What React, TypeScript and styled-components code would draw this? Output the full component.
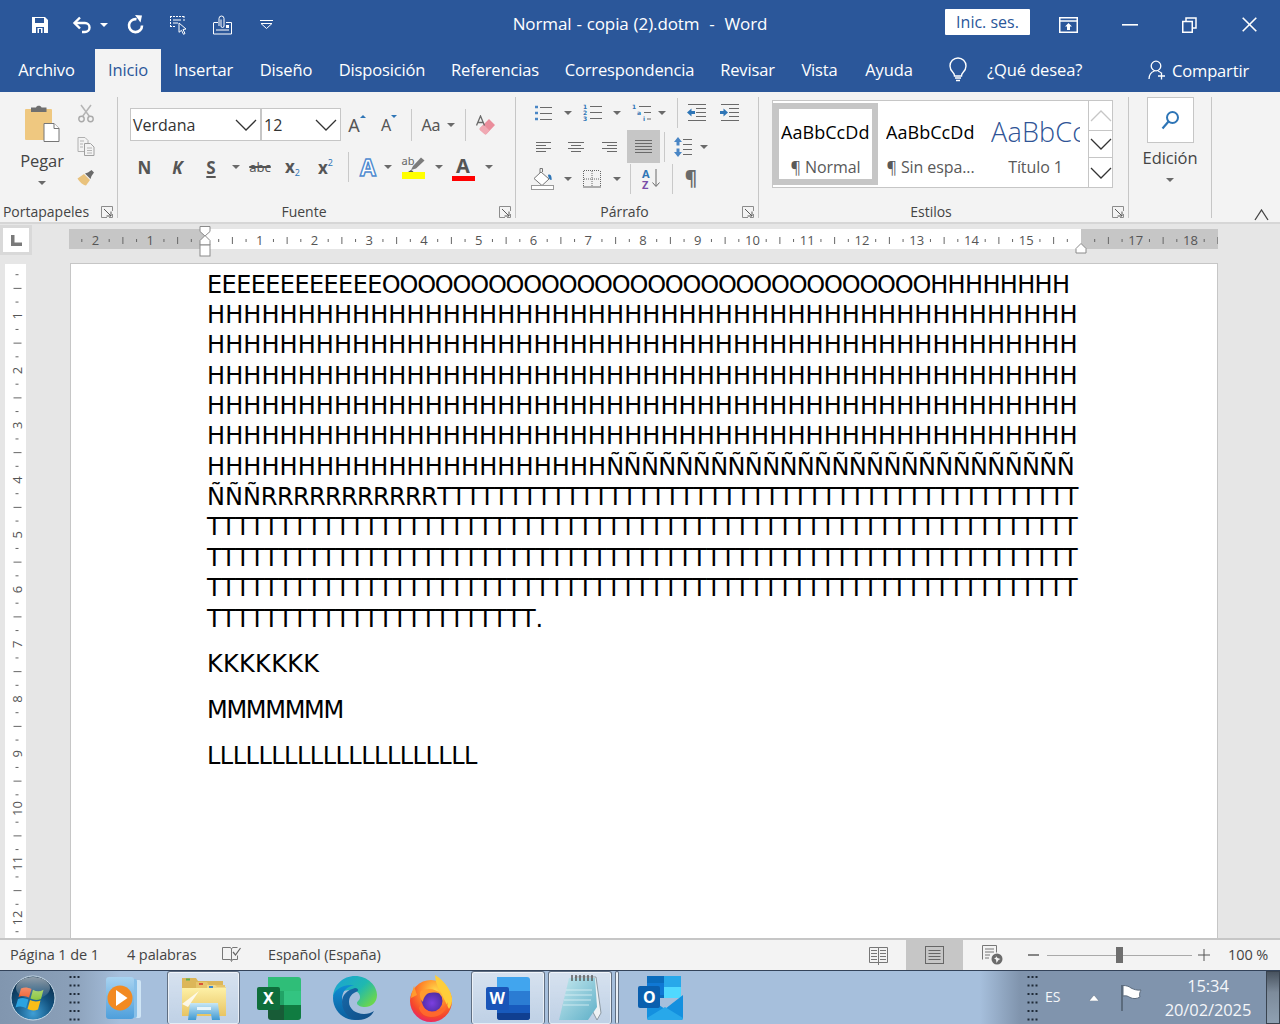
import React from "react";
import styled, { createGlobalStyle } from "styled-components";

const UI = `"Open Sans","Noto Sans",sans-serif`;
const BLUE = "#2b579a";
const GR = "#6a6a6a";

const Global = createGlobalStyle`
  html, body { margin: 0; padding: 0; background: #e6e6e6; }
  * { box-sizing: border-box; }
`;

const Screen = styled.div`
  width: 1280px; height: 1024px; overflow: hidden; display: flex; flex-direction: column;
  font-family: ${UI}; color: #444; font-size: 14px;
`;

/* ---------- title bar ---------- */
const TitleBar = styled.header`
  height: 49px; flex: none; background: ${BLUE}; display: grid; grid-template-columns: 1fr auto 1fr; align-items: center; color: #fff;
`;
const QuickBar = styled.div`display: flex; align-items: center; padding-left: 22px; height: 100%;`;
const WinCtl = styled.div`display: flex; align-items: center; justify-content: flex-end; height: 100%;`;
const Cell = styled.div<{ $w: number; $on?: boolean; $ml?: number }>`
  flex: none; width: ${(p) => p.$w}px; margin-left: ${(p) => p.$ml ?? 0}px; height: 100%;
  display: flex; align-items: center; justify-content: center;
  background: ${(p) => (p.$on ? "#c6c6c6" : "transparent")};
`;
const DocTitle = styled.div`font-size: 17px; white-space: pre; word-spacing: 0.6px; letter-spacing: -0.1px; margin-bottom: 3px;`;
const SignIn = styled.div`
  width: 85px; height: 26px; margin-right: 18px; background: #fff; color: ${BLUE}; font-size: 16px;
  display: flex; align-items: center; justify-content: center; margin-top: -5px; border-radius: 1px; padding-bottom: 1px;
`;

/* ---------- tabs ---------- */
const TabBar = styled.nav`
  height: 43px; flex: none; background: ${BLUE}; display: flex; align-items: stretch; padding-left: 5px;
`;
const Tab = styled.div<{ $w: number; $on?: boolean; $ml?: number }>`
  width: ${(p) => p.$w}px; margin-left: ${(p) => p.$ml ?? 0}px; flex: none; display: flex; align-items: center; justify-content: center;
  font-size: 16.5px; padding-bottom: 2px; letter-spacing: -0.15px; white-space: nowrap;
  color: ${(p) => (p.$on ? BLUE : "#fff")}; background: ${(p) => (p.$on ? "#f3f3f3" : "transparent")};
`;
const TellMe = styled.div`
  display: flex; align-items: center; margin-left: 22px; color: #fff; font-size: 16.5px; letter-spacing: -0.1px; width: 166px; gap: 20px; padding-bottom: 3px;
`;
const Share = styled.div`
  display: flex; align-items: center; margin-left: 33px; color: #fff; font-size: 16.5px; letter-spacing: -0.15px; gap: 6px; padding-bottom: 1px;
`;

/* ---------- ribbon ---------- */
const Ribbon = styled.section`
  height: 132px; flex: none; background: #f3f3f3; border-bottom: 2px solid #d6d6d6; display: flex; position: relative;
`;
const Group = styled.div<{ $w: number; $nosep?: boolean }>`
  width: ${(p) => p.$w}px; flex: none; display: flex; flex-direction: column; position: relative;
  margin: 5px 0 4px; padding-top: 0;
  border-right: ${(p) => (p.$nosep ? "none" : "1px solid #c6c6c6")};
`;
const GroupBody = styled.div`flex: 1; min-height: 0; display: flex;`;
const GroupFoot = styled.div`
  height: 20px; flex: none; display: flex; align-items: center; font-size: 14px; color: #444; padding-right: 4px; white-space: nowrap; margin-bottom: -3px;
`;
const FootLabel = styled.div`flex: 1; text-align: center; margin-right: 9px;`;
const Launcher = styled.div`width: 12px; height: 12px; display: flex; margin-top: 1px;`;

const Clip = styled.div`display: flex; width: 100%; padding-left: 0;`;
const PasteCol = styled.div`
  width: 72px; margin-left: 6px; display: flex; flex-direction: column; align-items: center; padding-top: 7px;
`;
const PasteName = styled.div`font-size: 16.5px; margin-top: 8px; line-height: 22px; letter-spacing: -0.1px;`;
const ClipTools = styled.div`display: flex; flex-direction: column; width: 16px; margin-left: 0; align-items: center; gap: 14px; padding-top: 7px;`;

const Rows = styled.div<{ $pl: number; $pt: number }>`
  display: flex; flex-direction: column; padding: ${(p) => p.$pt}px 0 0 ${(p) => p.$pl}px;
`;
const Row = styled.div<{ $h: number; $mb?: number }>`
  display: flex; align-items: center; height: ${(p) => p.$h}px; margin-bottom: ${(p) => p.$mb ?? 0}px;
`;
const Combo = styled.div<{ $w: number; $ml?: number }>`
  width: ${(p) => p.$w}px; height: 33px; flex: none; background: #fff; border: 1px solid #c6c6c6; margin-left: ${(p) => p.$ml ?? 0}px;
  display: flex; align-items: center; justify-content: space-between; padding: 0 3px 0 2px; font-size: 16px; color: #333;
`;
const Sep = styled.div<{ $ml?: number; $h?: number }>`
  width: 1px; flex: none; height: ${(p) => p.$h ?? 30}px; background: #c9c9c9; margin-left: ${(p) => p.$ml ?? 0}px;
`;
const Caret = styled.div`
  width: 0; height: 0; border-left: 4px solid transparent; border-right: 4px solid transparent; border-top: 4px solid ${GR};
`;
const Glyph = styled.span<{ $s?: number; $b?: boolean; $c?: string; $i?: boolean; $u?: boolean; $st?: boolean }>`
  font-size: ${(p) => p.$s ?? 17}px; font-weight: ${(p) => (p.$b ? 700 : 400)}; color: ${(p) => p.$c ?? "#555"};
  font-style: ${(p) => (p.$i ? "italic" : "normal")}; line-height: 1; font-family: "Noto Sans", sans-serif;
  text-decoration: ${(p) => (p.$u ? "underline" : p.$st ? "line-through" : "none")}; text-underline-offset: 2px; text-decoration-thickness: 2px;
  white-space: nowrap;
`;
const Sub = styled.sub`font-size: 9px; color: #2e75b6; font-weight: 400; vertical-align: -3px;`;
const Sup = styled.sup`font-size: 9px; color: #2e75b6; font-weight: 400; vertical-align: 8px;`;
const Outlined = styled.span`
  font: 700 23px "Noto Sans", sans-serif; color: #fff; -webkit-text-stroke: 1.4px #4f8bd0; line-height: 1;
`;
const ColorA = styled.div`display: flex; flex-direction: column; align-items: center; line-height: 1; margin-top: 2px;`;
const ColorBar = styled.div<{ $c: string; $h: number }>`width: 23px; height: ${(p) => p.$h}px; background: ${(p) => p.$c};`;
const HighlightBox = styled.div`display: flex; flex-direction: column; align-items: center; margin-top: 0;`;
const AbLabel = styled.span`font: 11px/11px "Noto Sans", sans-serif; color: #666; margin-bottom: -11px; align-self: flex-start;`;

const Gallery = styled.div`
  margin: 3px 0 0 13px; width: 341px; height: 88px; background: #fff; border: 1px solid #c6c6c6; display: flex; padding: 2px 0 2px 0;
`;
const StyleItem = styled.div<{ $w: number; $sel?: boolean }>`
  width: ${(p) => p.$w}px; flex: none; display: flex; flex-direction: column; align-items: center; justify-content: flex-start;
  padding-top: ${(p) => (p.$sel ? 11 : 17)}px; overflow: hidden;
  border: ${(p) => (p.$sel ? "6px solid #c6c6c6" : "none")};
`;
const Sample = styled.div<{ $big?: boolean }>`
  font-size: ${(p) => (p.$big ? 27 : 18)}px; color: ${(p) => (p.$big ? "#2f5496" : "#000")}; line-height: 24px; height: 24px;
  width: 89px; overflow: hidden; white-space: nowrap; letter-spacing: ${(p) => (p.$big ? 0.2 : 0.05)}px; font-weight: ${(p) => (p.$big ? 300 : 400)};
  font-family: "Open Sans", sans-serif;
`;
const StyleName = styled.div`font-size: 16px; color: #595959; margin-top: 12px; white-space: nowrap; letter-spacing: -0.1px;`;
const Scroller = styled.div`width: 24px; margin-left: auto; margin-top: -2px; margin-bottom: -2px; display: flex; flex-direction: column; flex: none;`;
const ScrollBtn = styled.div<{ $h: number }>`
  height: ${(p) => p.$h}px; display: flex; align-items: center; justify-content: center; border-left: 1px solid #c6c6c6; border-bottom: 1px solid #c6c6c6; background: #fff;
  &:last-child { border-bottom: none; }
`;
const EditCol = styled.div`width: 100%; display: flex; flex-direction: column; align-items: center;`;
const EditBtn = styled.div`
  width: 47px; height: 46px; background: #fff; border: 1px solid #c6c6c6; display: flex; align-items: center; justify-content: center;
`;
const EditName = styled.div`font-size: 16.5px; margin-top: 4px; line-height: 22px; letter-spacing: -0.1px;`;
const CaretGap = styled.div`margin-top: 9px;`;
const Collapse = styled.div`position: absolute; right: 11px; bottom: 1px; display: flex;`;

/* ---------- rulers ---------- */
const RulerRow = styled.div`height: 39px; flex: none; background: #e6e6e6; display: flex;`;
const TabCorner = styled.div`
  width: 32px; height: 30px; margin-top: 1px; background: #fff; border: 3px solid #d9d9d9; flex: none; display: flex; align-items: center; justify-content: center;
`;
const HRuler = styled.svg`flex: none; margin-left: 37px; display: block;`;
const DocArea = styled.main`flex: 1; min-height: 0; background: #e6e6e6; display: flex; overflow: hidden;`;
const VRuler = styled.svg`flex: none; display: block; margin-left: 5px;`;
const Page = styled.article`
  width: 1148px; margin-left: 44px; background: #fff; border: 1px solid #c6c6c6; border-bottom: none; padding: 5.6px 0 0 136px;
  font-family: "DejaVu Sans", Verdana, sans-serif; font-size: 24px; color: #000;
`;
const DocLine = styled.p<{ $mb?: number }>`
  margin: 0 0 ${(p) => p.$mb ?? 0}px; line-height: 30.36px; height: 30.36px; white-space: nowrap;
`;
const Run = styled.span<{ $ls: number }>`letter-spacing: ${(p) => p.$ls}px;`;

/* ---------- status bar ---------- */
const StatusBar = styled.footer`
  height: 32px; flex: none; background: #f3f3f3; border-top: 2px solid #c6c6c6; display: flex; align-items: stretch; font-size: 14.5px; color: #444; position: relative; z-index: 1;
`;
const StatusText = styled.div<{ $w: number; $ml?: number }>`
  width: ${(p) => p.$w}px; margin-left: ${(p) => p.$ml ?? 0}px; flex: none; display: flex; align-items: center; white-space: nowrap; letter-spacing: -0.1px; padding-bottom: 2px;
`;
const ZoomSlider = styled.div`
  width: 145px; height: 1px; background: #a9a9a9; flex: none; align-self: center; display: flex; align-items: center; margin-left: 1px;
`;
const Thumb = styled.div`width: 7px; height: 16px; background: #6e6e6e; margin-left: 69px; flex: none;`;

/* ---------- taskbar ---------- */
const Taskbar = styled.div`
  height: 54px; flex: none; display: flex; align-items: stretch; border-top: 1px solid #33435a;
  background: linear-gradient(90deg, #8196af 0, #8a9fb8 70px, #a6bfdc 120px, #a6bfdc 980px, #8094ad 1020px, #8094ad 100%);
  color: #f4f6f9;
`;
const TaskCell = styled.div<{ $w: number; $ml?: number; $active?: boolean }>`
  width: ${(p) => p.$w}px; margin-left: ${(p) => p.$ml ?? 0}px; flex: none; display: flex; align-items: center; justify-content: center;
  ${(p) => p.$active && `
    background: linear-gradient(180deg, rgba(255,255,255,.55), rgba(255,255,255,.28));
    border: 1px solid rgba(60,75,95,.75); border-radius: 3px; box-shadow: inset 0 0 0 1px rgba(255,255,255,.6); border-bottom: none;
  `}
`;
const Gripper = styled.svg`display: block;`;
const LangText = styled.div`font-size: 14px; width: 30px; margin-left: 6px; align-self: center; padding-bottom: 3px;`;
const Clock = styled.div`
  width: 110px; margin-left: 10px; display: flex; flex-direction: column; align-items: center; justify-content: center; font-size: 16.5px; line-height: 24px; letter-spacing: -0.1px; color: #f4f6f9; padding-top: 1px;
`;
const ShowDesktop = styled.div`
  width: 14px; margin-left: auto; background: linear-gradient(180deg, #48535f, #7d8b9b 40%, #8fa0b2); border: 1px solid #39434f;
`;

/* ---------- icons ---------- */
const Svg: React.FC<React.PropsWithChildren<{ w: number; h: number; vb?: string }>> = ({ w, h, vb, children }) => (
  <svg width={w} height={h} viewBox={vb ?? `0 0 ${w} ${h}`} fill="none" style={{ display: "block", flex: "none" }}>{children}</svg>
);
const L: React.FC<{ d: string; c?: string; sw?: number }> = ({ d, c = GR, sw = 1 }) => <path d={d} stroke={c} strokeWidth={sw} fill="none" />;

const SaveIcon = () => (
  <Svg w={18} h={18}>
    <path d="M1 1h13l3 3v13H1z" fill="#fff" />
    <rect x="4" y="2" width="9" height="5" fill={BLUE} />
    <rect x="5" y="11" width="8" height="6" fill={BLUE} />
    <rect x="6.500" y="12" width="5" height="5" fill="#fff" />
    <rect x="8" y="13" width="2" height="4" fill={BLUE} />
  </Svg>
);
const UndoIcon = () => (
  <Svg w={20} h={18}>
    <L d="M3 7h10a4.500 4.500 0 0 1 0 9h-3" c="#fff" sw={2.4} />
    <L d="M8 1.500L2.500 7 8 12.500" c="#fff" sw={2.4} />
  </Svg>
);
const RedoIcon = () => (
  <Svg w={19} h={19}>
    <path d="M10.500 4.200A6.500 6.500 0 1 0 16 10.500" stroke="#fff" strokeWidth="2.600" fill="none" />
    <path d="M9 0l7 .5-1.500 7z" fill="#fff" />
  </Svg>
);
const SelectIcon = () => (
  <Svg w={19} h={20}>
    <path d="M1 1.500h14M1 11.500h6M1.500 1v11M15 1v6" stroke="#fff" strokeDasharray="2 1" />
    <L d="M4 5h8M4 8h5" c="#fff" />
    <path d="M10 8l7 6-3 .5 2 4-1.500.8-2-4-2.500 2z" fill={BLUE} stroke="#fff" strokeWidth="1" />
  </Svg>
);
const AttachIcon = () => (
  <Svg w={19} h={20}>
    <path d="M1 7.500h4M13 7.500h5.500V19H.5V7.500" stroke="#fff" />
    <path d="M6 11V3.500a2.500 2.500 0 0 1 5 0V11a1.500 1.500 0 0 1-3 0V4.500" stroke="#fff" />
    <rect x="13" y="10" width="3" height="3" fill="#fff" />
    <path d="M3 15h13" stroke="#fff" />
  </Svg>
);
const CustomIcon = () => (
  <Svg w={13} h={9}>
    <path d="M0 .5h13" stroke="#fff" />
    <path d="M1 3.500l5.500 5 5.500-5z" stroke="#fff" fill={BLUE} />
  </Svg>
);
const SmallWhiteCaret = () => (
  <Svg w={8} h={4}><path d="M0 0h8L4 4z" fill="#fff" /></Svg>
);
const DisplayIcon = () => (
  <Svg w={19} h={16}>
    <rect x=".75" y=".75" width="17.500" height="14.500" stroke="#fff" strokeWidth="1.500" />
    <path d="M1 4h17" stroke="#fff" strokeWidth="1.500" />
    <path d="M9.500 6l3.500 3.500h-2V13H8V9.500H6z" fill="#fff" />
  </Svg>
);
const MinIcon = () => <Svg w={16} h={2}><rect width="16" height="1.600" fill="#fff" /></Svg>;
const RestoreIcon = () => (
  <Svg w={15} h={16}>
    <rect x=".75" y="4.500" width="9.500" height="10.750" stroke="#fff" strokeWidth="1.500" />
    <path d="M4 4V1h10v10h-3.500" stroke="#fff" strokeWidth="1.500" />
  </Svg>
);
const CloseIcon = () => (
  <Svg w={15} h={15}><L d="M.7.7l13.600 13.600M14.300.7L.7 14.300" c="#fff" sw={1.6} /></Svg>
);
const BulbIcon = () => (
  <Svg w={18} h={25}>
    <path d="M9 1a8 8 0 0 0-8 8c0 3 1.500 5 3 6.500C5.500 17 5.500 18 5.500 19h7c0-1 0-2 1.500-3.500 1.500-1.500 3-3.500 3-6.500a8 8 0 0 0-8-8z" stroke="#fff" strokeWidth="1.400" />
    <path d="M6 21h6M7 23.500h4" stroke="#fff" strokeWidth="1.500" />
  </Svg>
);
const PersonIcon = () => (
  <Svg w={18} h={20}>
    <circle cx="8" cy="6" r="4.800" stroke="#fff" strokeWidth="1.300" />
    <path d="M1 19c0-4.500 2.500-7 5.500-8M10 11c1.300.4 2.300 1 3 2" stroke="#fff" strokeWidth="1.300" />
    <path d="M10 16h7M13.500 12.500v7" stroke="#fff" strokeWidth="1.300" />
  </Svg>
);
const LauncherIcon = () => (
  <Svg w={12} h={12}>
    <path d="M11.500 5V.5H.5v11H6" stroke="#8c8c8c" />
    <path d="M3 3l7 7M10 5.500V10H5.500" stroke="#595959" />
    <path d="M8 11.500h3.500V8" stroke="#8c8c8c" />
  </Svg>
);
const Chevron: React.FC<{ w?: number; c?: string; up?: boolean }> = ({ w = 22, c = "#333", up }) => (
  <Svg w={w} h={12}><L d={up ? `M1 11L${w / 2} 1l${w / 2 - 1} 10` : `M1 1l${w / 2 - 1} 10L${w - 1} 1`} c={c} sw={1.300} /></Svg>
);
const PasteIcon = () => (
  <Svg w={36} h={38}>
    <rect x="1" y="5" width="27" height="31" rx="1" fill="#efc880" />
    <path d="M7 3.500h5C12.500 1 17 1 17.500 3.500h5V8H7z" fill="#6f6f6f" />
    <path d="M20 19.500h10l5 5v13H20z" fill="#fff" stroke="#767676" />
    <path d="M30 19.500v5h5" stroke="#767676" fill="#fff" />
  </Svg>
);
const CutIcon = () => (
  <Svg w={16} h={19}>
    <circle cx="3.500" cy="15" r="2.700" stroke="#a9a9a9" strokeWidth="1.400" />
    <circle cx="12.500" cy="15" r="2.700" stroke="#a9a9a9" strokeWidth="1.400" />
    <L d="M11.500 12.500L3 1M4.500 12.500L13 1" c="#b5b5b5" sw={1.500} />
  </Svg>
);
const CopyIcon = () => (
  <Svg w={18} h={19}>
    <path d="M1 .5h7l3 3v11H1z" fill="#f3f3f3" stroke="#b0b0b0" />
    <path d="M7.500 6.500h6l3.500 3.500v8.500H7.500z" fill="#f3f3f3" stroke="#a0a0a0" />
    <L d="M3 4h4M3 7h3M3 10h3M10 11h5M10 13.500h5M10 16h5" c="#b5b5b5" />
  </Svg>
);
const BrushIcon = () => (
  <Svg w={18} h={16}>
    <path d="M.5 8.500L7 4l6 6-4 5.500C6 15 2.500 12 .5 8.500z" fill="#e9c27c" />
    <path d="M8 3.500l3-1 3.500-2.500 2.500 2.500-2.500 3.500-1 3z" fill="#6a6a6a" />
  </Svg>
);
const GrowMark = styled.div<{ $down?: boolean }>`
  width: 0; height: 0; margin: -16px 0 0 0; border-left: 3.500px solid transparent; border-right: 3.500px solid transparent;
  ${(p) => (p.$down ? "border-top: 3px solid #2e75b6;" : "border-bottom: 3px solid #2e75b6;")}
`;
const EraserIcon = () => (
  <Svg w={20} h={20}>
    <path d="M4 13l9-9 6 6-8.500 9a1.500 1.500 0 0 1-2 0L4 15a1.500 1.500 0 0 1 0-2z" fill="#ea8d9b" />
    <path d="M4 13l3.500-3.500 6 6L10.500 19a1.500 1.500 0 0 1-2 0L4 15a1.500 1.500 0 0 1 0-2z" fill="#f0a9b3" />
    <path d="M.5 10.500L4.500 1l4 9.500M1.800 7.500h5.400" stroke="#6a6a6a" strokeWidth="1.300" fill="none" />
  </Svg>
);
const PenIcon = () => (
  <Svg w={24} h={17}>
    <path d="M9 15l2-4 8-8.500 3.500 3-8.500 8z" fill="#7b7b7b" />
    <path d="M6 17l3-2 2.500 1.500L10.500 17z" fill="#555" />
  </Svg>
);
const Bullets = () => (
  <Svg w={18} h={16}>
    <path d="M1 2h3M1 8h3M1 14h3" stroke="#4a86c5" strokeWidth="2.400" />
    <L d="M6 2.500h12M6 8.500h12M6 14.500h12" />
  </Svg>
);
const SmallNum = styled.text`font: 700 6px "DejaVu Sans", sans-serif; fill: #2e75b6;`;
const Numbers = () => (
  <Svg w={19} h={17}>
    <SmallNum x="0" y="5">1</SmallNum><SmallNum x="0" y="11">2</SmallNum><SmallNum x="0" y="17">3</SmallNum>
    <L d="M7 2.500h12M7 8.500h12M7 14.500h12" />
  </Svg>
);
const Multi = () => (
  <Svg w={19} h={17}>
    <SmallNum x="0" y="5">1</SmallNum><SmallNum x="5" y="11">a</SmallNum><SmallNum x="11" y="17">i</SmallNum>
    <L d="M7 2.500h12M12 8.500h7M15 15h4" />
  </Svg>
);
const Indent: React.FC<{ out?: boolean }> = ({ out }) => (
  <Svg w={19} h={17}>
    <L d="M1 .5h18M9 4.500h10M9 8.500h10M9 12.500h10M1 16.500h18" />
    {out ? <path d="M0 8.500l4.500-4v2.500H8v3H4.500v2.500z" fill="#2e75b6" /> : <path d="M8 8.500l-4.500-4v2.500H0v3h3.500v2.500z" fill="#2e75b6" />}
  </Svg>
);
const Align: React.FC<{ rows: [number, number][]; w: number }> = ({ rows, w }) => (
  <Svg w={w} h={rows.length * 3}>
    {rows.map(([a, b], i) => <path key={i} d={`M${a} ${i * 3 + 1.500}H${b}`} stroke={GR} />)}
  </Svg>
);
const LineSpace = () => (
  <Svg w={18} h={20}>
    <path d="M4 0l4 5H5.500v3.500h-3V5H0zM4 20l4-5H5.500v-3.500h-3V15H0z" fill="#4a86c5" />
    <L d="M9 2.500h9M9 7.500h9M9 12.500h9M9 17.500h9" />
  </Svg>
);
const Shading = () => (
  <Svg w={24} h={24}>
    <path d="M10 5l8 7-7 6.500L3 11.500z" stroke="#777" fill="#fff" />
    <path d="M9 6V1.500h2.500V5" stroke="#777" />
    <path d="M17 8c3-2 4 3 3.500 5-1.500 0-3-1-3.500-5z" fill="#2e75b6" />
    <rect x=".5" y="18.500" width="22" height="4" fill="#fff" stroke="#999" />
  </Svg>
);
const Borders = () => (
  <Svg w={18} h={18}>
    <path d="M.5 1v16M17.500 1v16M9 1v16M1 9h16M1 .5h16" stroke="#666" strokeDasharray="1 1" />
    <path d="M0 17h18" stroke="#666" />
  </Svg>
);
const SortBox = styled.div`display: flex; align-items: flex-start; gap: 1px; height: 22px;`;
const SortLetters = styled.div`display: flex; flex-direction: column; width: 9px; font: 700 11px/11px "Noto Sans", sans-serif;`;
const SortLetter = styled.span<{ $c: string }>`color: ${(p) => p.$c}; height: 11px; display: block;`;
const SortArrow = () => (
  <Svg w={8} h={20}><L d="M4 1v17M.5 14.500l3.500 4 3.500-4" /></Svg>
);
const SearchIcon = () => (
  <Svg w={19} h={20}>
    <circle cx="11.500" cy="7.500" r="5.500" stroke="#2e75b6" strokeWidth="2" />
    <path d="M7.500 11.500L1.500 18.500" stroke="#2e75b6" strokeWidth="2.200" />
  </Svg>
);
const CornerL = () => (
  <Svg w={11} h={11}><path d="M0 0h3.500v7.500H11V11H0z" fill="#7a7a7a" /></Svg>
);
const ProofIcon = () => (
  <Svg w={20} h={17}>
    <path d="M.5.500h8L9.500 2l1-1.500h5M.5.500v12h8l1 2 1-2h5v-4M9.500 2v11" stroke="#777" />
    <path d="M11 5l2.500 3 5-7" stroke="#666" strokeWidth="1.200" />
  </Svg>
);
const ReadIcon = () => (
  <Svg w={19} h={19}>
    <path d="M.5 1.500h9v15h-9zM9.500 1.500h9v15h-9z" stroke="#777" />
    <L d="M2 4.500h6M2 7.500h6M2 10.500h6M2 13.500h6M11 4.500h6M11 7.500h6M11 10.500h6M11 13.500h6" c="#777" />
    <path d="M9.500 16.500v2.500" stroke="#777" />
  </Svg>
);
const PrintIcon = () => (
  <Svg w={19} h={18}>
    <rect x=".5" y=".5" width="18" height="17" stroke="#666" />
    <L d="M3.500 4.500h12M3.500 7.500h12M3.500 10.500h12M3.500 13.500h12" c="#666" />
  </Svg>
);
const WebIcon = () => (
  <Svg w={21} h={20}>
    <path d="M.5 14.500V.500h14v7" stroke="#777" />
    <L d="M3 4h9M3 7h9M3 10h5M3 13h4" c="#777" />
    <circle cx="15" cy="14" r="5.500" fill="#6b6b6b" />
    <path d="M13 10c2 1.500 1 3-1 3.500l2 1 .5 3.500 2-3 2-1-3-1z" fill="#f3f3f3" />
  </Svg>
);
const PlusMinus: React.FC<{ plus?: boolean }> = ({ plus }) => (
  <Svg w={12} h={12}><path d={plus ? "M0 6h12M6 0v12" : "M0 6h11"} stroke="#555" strokeWidth={plus ? 1 : 1.400} /></Svg>
);

/* ---------- logos ---------- */
const Orb = () => (
  <Svg w={46} h={46}>
    <defs>
      <radialGradient id="orb" cx="50%" cy="85%" r="80%"><stop offset="0" stopColor="#3f9fd6" /><stop offset=".55" stopColor="#12527f" /><stop offset="1" stopColor="#0b2b47" /></radialGradient>
      <linearGradient id="gl" x1="0" y1="0" x2="0" y2="1"><stop offset="0" stopColor="#fff" stopOpacity=".55" /><stop offset="1" stopColor="#fff" stopOpacity=".05" /></linearGradient>
    </defs>
    <circle cx="23" cy="23" r="22" fill="url(#orb)" stroke="#c9dbe9" strokeWidth="1" />
    <path d="M11 13.500c3-1.500 6.500-1.500 10.500.5l-2.500 8.500c-3.500-1.800-7-2-10.500-.5z" fill="#ee5a28" />
    <path d="M23 14.800c3.500 2 7 2 10.500 0L31 24c-3.500 1.500-7 1.300-10.500-.5z" fill="#8cc63e" />
    <path d="M8 24c3.500-1.500 7-1.300 10.500.5L16 33c-3.500-1.800-7-2-10.500-.5z" fill="#2ba3e0" />
    <path d="M20 25c3.500 1.800 7 2 10.500.5L28 34.500c-3.500 1.500-7 1.300-10.500-.5z" fill="#fbbd18" />
    <ellipse cx="23" cy="13" rx="17" ry="11" fill="url(#gl)" />
  </Svg>
);
const MediaIcon = () => (
  <Svg w={38} h={44}>
    <defs><linearGradient id="mp" x1="0" y1="0" x2="0" y2="1"><stop offset="0" stopColor="#a8d3f0" /><stop offset="1" stopColor="#4e9fdb" /></linearGradient></defs>
    <rect x="12" y="4" width="25" height="38" rx="2" fill="#cfe5f5" />
    <rect x="8" y="3" width="25" height="39" rx="2" fill="#87bfe8" />
    <rect x="2" y="1" width="28" height="42" rx="3" fill="url(#mp)" />
    <circle cx="16" cy="22" r="12.500" fill="#f28a22" />
    <path d="M12 14l11.500 8L12 30z" fill="#fff" />
  </Svg>
);
const ExplorerIcon = () => (
  <Svg w={46} h={48}>
    <defs><linearGradient id="fo" x1="0" y1="0" x2="0" y2="1"><stop offset="0" stopColor="#fdf0a6" /><stop offset="1" stopColor="#e8c463" /></linearGradient>
    <linearGradient id="gb" x1="0" y1="0" x2="0" y2="1"><stop offset="0" stopColor="#c7e6f5" /><stop offset="1" stopColor="#3f9ad2" /></linearGradient></defs>
    <path d="M1 4h14l2 3h25v8H1z" fill="#dcb659" />
    <rect x="5" y="4.500" width="4" height="2" fill="#5fb04f" />
    <path d="M15 8h11l2 3h16v6H15z" fill="#e7c56b" />
    <rect x="18" y="9" width="4" height="2" fill="#d9533b" />
    <path d="M26 11h8l2 2h9v6H26z" fill="#f0d88a" />
    <rect x="28" y="12" width="4" height="2" fill="#3d8ad0" />
    <path d="M1 14h44v28H1z" fill="url(#fo)" />
    <path d="M7 46l2-17h28l2 17h-8l-1-6H16l-1 6z" fill="url(#gb)" />
    <path d="M16 33h14v3H16z" fill="#e8f5fb" />
    <path d="M1 30L18 17 7 33z" fill="#fff" opacity=".8" />
  </Svg>
);
const TileText = styled.text`font: 700 16px "Noto Sans", sans-serif; fill: #fff;`;
const ExcelIcon = () => (
  <Svg w={46} h={44}>
    <path d="M12 1h30a3 3 0 0 1 3 3v11H12z" fill="#2fbe78" />
    <path d="M12 15h16v14H12z" fill="#21a366" /><path d="M28 15h17v14H28z" fill="#33c481" />
    <path d="M12 29h16v15H15a3 3 0 0 1-3-3z" fill="#185c37" /><path d="M28 29h17v12a3 3 0 0 1-3 3H28z" fill="#107c41" />
    <rect x="1" y="11" width="23" height="23" rx="2" fill="#0f6e3b" />
    <TileText x="7" y="28">X</TileText>
  </Svg>
);
const EdgeIcon = () => (
  <Svg w={46} h={46}>
    <defs>
      <linearGradient id="e1" x1="0" y1="0" x2="1" y2=".7"><stop offset="0" stopColor="#1aa0d8" /><stop offset=".6" stopColor="#1fb8b0" /><stop offset="1" stopColor="#6ad64e" /></linearGradient>
      <linearGradient id="e2" x1="0" y1="0" x2="0" y2="1"><stop offset="0" stopColor="#0f8ed4" /><stop offset="1" stopColor="#0b5d9c" /></linearGradient>
      <linearGradient id="e3" x1="0" y1="0" x2="1" y2="1"><stop offset="0" stopColor="#1768a8" /><stop offset="1" stopColor="#0f4d86" /></linearGradient>
    </defs>
    <path d="M1 23C1 10 11 1 23 1c13 0 22 10 22 19 0 8-6 12-12 12-4 0-8-1.500-8-4 0-2 3-2.500 3-6 0-4-4-7-9-7C10 15 1 20 1 23z" fill="url(#e1)" />
    <path d="M1 23c0-7 8-13 18-13 5 0 1 .5 0 1-6 2-9 7-9 13 0 9 6 17 15 20 2 .7 0 1-2 1C11 45 1 35 1 23z" fill="url(#e2)" />
    <path d="M23 13c-8 2-13 7-13 14 0 9 7 18 16 18 7 0 13-3 16-9-3 2-6 3-10 3-8 0-15-5-15-12 0-6 4-9 7-10 3-.8 3-3.500-1-4z" fill="url(#e3)" />
  </Svg>
);
const FirefoxIcon = () => (
  <Svg w={46} h={48}>
    <defs>
      <radialGradient id="f1" cx="60%" cy="25%" r="85%"><stop offset="0" stopColor="#ffd84a" /><stop offset=".4" stopColor="#ff8a2a" /><stop offset=".75" stopColor="#f5442d" /><stop offset="1" stopColor="#e31587" /></radialGradient>
      <radialGradient id="f2" cx="50%" cy="60%" r="60%"><stop offset="0" stopColor="#7b3fe0" /><stop offset="1" stopColor="#4a2a9c" /></radialGradient>
    </defs>
    <circle cx="23" cy="27" r="21" fill="url(#f1)" />
    <path d="M27 1c7 4 15 12 17 23 .5 4-1 8-3 11l-6-12c-2-6-7-9-8-22z" fill="#ffce3a" />
    <path d="M6 12c-1 4-3 8-3 12l6-3z" fill="#ff9a2e" />
    <circle cx="24" cy="27" r="10.500" fill="url(#f2)" />
    <path d="M13 17c6-3 14-3 20 3-6-2-12-2-15 1-2 2-3 5-3 7-3-3-4-8-2-11z" fill="#ff9a2e" />
    <path d="M14 28c1 7 7 11 14 10 6-1 10-5 12-10-1 9-8 15-17 15-6 0-11-4-12-9z" fill="#ff6a2c" opacity=".9" />
  </Svg>
);
const WordIcon = () => (
  <Svg w={46} h={44}>
    <path d="M12 1h30a3 3 0 0 1 3 3v11H12z" fill="#41a5ee" />
    <rect x="12" y="15" width="33" height="14" fill="#2b7cd3" />
    <path d="M12 29h33v12a3 3 0 0 1-3 3H15a3 3 0 0 1-3-3z" fill="#185abd" />
    <path d="M12 37h33v4a3 3 0 0 1-3 3H15a3 3 0 0 1-3-3z" fill="#103f91" />
    <rect x="1" y="11" width="23" height="23" rx="2" fill="#1a55b8" />
    <TileText x="4.500" y="28">W</TileText>
  </Svg>
);
const NotepadIcon = () => (
  <Svg w={44} h={48}>
    <defs><linearGradient id="np" x1="0" y1="0" x2="1" y2="1"><stop offset="0" stopColor="#c5e8ee" /><stop offset="1" stopColor="#5fb0c8" /></linearGradient></defs>
    <path d="M17 3h21l5 36-4 7z" fill="#eef2f4" stroke="#8d9aa3" />
    <path d="M11 4h26l2 29-9 13H1z" fill="url(#np)" />
    <path d="M8 16h26M7 21h27M6 26h27M5 31h26" stroke="#e8f6f9" opacity=".7" />
    <path d="M14 1v6M18 1v6M22 1v6M26 1v6M30 1v6M34 1v6" stroke="#555" strokeWidth="1.400" />
  </Svg>
);
const OutlookIcon = () => (
  <Svg w={46} h={46}>
    <path d="M9 1h32a2 2 0 0 1 2 2v20H9z" fill="#0a6cbd" />
    <rect x="9" y="8" width="17" height="12" fill="#0f78d4" />
    <rect x="26" y="1" width="17" height="11" fill="#28a8ea" />
    <rect x="26" y="12" width="17" height="11" fill="#50d9ff" />
    <path d="M9 22l18 12 18-14v23a2 2 0 0 1-2 2H11a2 2 0 0 1-2-2z" fill="#1490df" />
    <path d="M9 43l18-11 18 11c0 1-1 2-2 2H11c-1 0-2-1-2-2z" fill="#28a8ea" />
    <rect x="0" y="11" width="22" height="22" rx="2" fill="#0a5fae" />
    <TileText x="5" y="28">O</TileText>
  </Svg>
);
const Grip = () => (
  <Gripper width="12" height="50">
    {[0, 1, 2, 3, 4, 5, 6].map((r) => [0, 1, 2].map((c) => <rect key={`${r}${c}`} x={c * 4 + 0.5} y={r * 8.5 + 3} width="2" height="2" fill="#1f2a38" />))}
  </Gripper>
);
const FlagIcon = () => (
  <Svg w={24} h={28}>
    <path d="M3 1v26" stroke="#5b6b7d" strokeWidth="2" />
    <path d="M4 1.500c4 0 6 1 8 2.500 3 1.500 6 2.500 10 2-1 2-2 4-1 7-3 2-7 2-10 .5-2-1.500-4-2-7-1.500z" fill="#fff" stroke="#5b6b7d" />
  </Svg>
);
const TrayUp = () => <Svg w={10} h={6}><path d="M0 6l5-6 5 6z" fill="#fff" stroke="#44556a" strokeWidth=".4" /></Svg>;

/* ---------- rulers drawn ---------- */
const CM = 54.75;
const RulerLabel = styled.text`font: 13px "Open Sans", sans-serif; fill: #555;`;
const HorizontalRuler = () => {
  const ox = 136;
  const ticks: React.ReactNode[] = [];
  for (let k = -9; k <= 74; k++) {
    if (k === 0 || k === 64) continue;
    const x = ox + (k * CM) / 4;
    if (x < 0 || x > 1149) continue;
    const cm = k / 4;
    if (k % 4 === 0) {
      ticks.push(<RulerLabel key={k} x={x} y={21} textAnchor="middle">{Math.abs(cm)}</RulerLabel>);
    } else if (k % 2 === 0) {
      ticks.push(<path key={k} d={`M${x} 13v7`} stroke="#666" />);
    } else {
      ticks.push(<path key={k} d={`M${x} 15v3`} stroke="#666" />);
    }
  }
  return (
    <HRuler width={1149} height={36} viewBox="0 0 1149 36">
      <rect x="0" y="5" width="1149" height="20" fill="#fff" />
      <rect x="0" y="5" width={ox} height="20" fill="#c6c6c6" />
      <rect x="1012" y="5" width="137" height="20" fill="#c6c6c6" />
      {ticks}
      <path d="M131 2.500h10v5l-5 4.500-5-4.500z" fill="#fff" stroke="#8a8a8a" />
      <path d="M136 11.500l5 5v4.500h-10v-4.500z" fill="#fff" stroke="#8a8a8a" />
      <rect x="131" y="21" width="10" height="11" fill="#fff" stroke="#8a8a8a" />
      <path d="M1012 19.500l5 5v4.500h-10v-4.500z" fill="#fff" stroke="#8a8a8a" />
    </HRuler>
  );
};
const VerticalRuler = () => {
  const H = 675;
  const zero = -2;
  const items: React.ReactNode[] = [];
  for (let k = 1; k <= 49; k++) {
    const y = zero + (k * CM) / 4;
    if (y > H) continue;
    if (k % 4 === 0) {
      items.push(<RulerLabel key={k} transform={`translate(17 ${y}) rotate(-90)`} textAnchor="middle">{k / 4}</RulerLabel>);
    } else if (k % 2 === 0) {
      items.push(<path key={k} d={`M8.500 ${y}h8`} stroke="#666" />);
    } else {
      items.push(<path key={k} d={`M10.500 ${y}h3`} stroke="#666" />);
    }
  }
  return (
    <VRuler width={21} height={H} viewBox={`0 0 21 ${H}`}>
      <rect x="0" y="1" width="21" height={H} fill="#fff" />
      {items}
    </VRuler>
  );
};

/* ---------- document data ---------- */
type R = [string, number, number];
const T = "T";
const lines: { runs: R[]; mb?: number }[] = [
  { runs: [["E", 12, -0.6], ["O", 31, -1.2], ["H", 8, -0.65]] },
  { runs: [["H", 48, 0.09]] },
  { runs: [["H", 48, 0.09]] },
  { runs: [["H", 48, 0.09]] },
  { runs: [["H", 48, 0.09]] },
  { runs: [["H", 48, 0.09]] },
  { runs: [["H", 22, 0.1], ["Ñ", 27, -0.63]] },
  { runs: [["Ñ", 3, 0], ["R", 11, -0.65], [T, 45, 0]] },
  { runs: [[T, 61, 0.03]] },
  { runs: [[T, 61, 0.03]] },
  { runs: [[T, 61, 0.03]] },
  { runs: [[T, 23, 0.03], [".", 1, 0]], mb: 15.3 },
  { runs: [["K", 7, 0.3]], mb: 15.3 },
  { runs: [["M", 7, -1.3]], mb: 15.3 },
  { runs: [["L", 21, -0.52]] },
];

const tabs: [string, number][] = [["Insertar", 85], ["Diseño", 80], ["Disposición", 112], ["Referencias", 114], ["Correspondencia", 155], ["Revisar", 81], ["Vista", 63], ["Ayuda", 76]];

export default function App() {
  return (
    <Screen>
      <Global />
      <TitleBar>
        <QuickBar>
          <Cell $w={36}><SaveIcon /></Cell>
          <Cell $w={34} $ml={7}><UndoIcon /></Cell>
          <Cell $w={10}><SmallWhiteCaret /></Cell>
          <Cell $w={46} $ml={3}><RedoIcon /></Cell>
          <Cell $w={40}><SelectIcon /></Cell>
          <Cell $w={48}><AttachIcon /></Cell>
          <Cell $w={40}><CustomIcon /></Cell>
        </QuickBar>
        <DocTitle>Normal - copia (2).dotm  -  Word</DocTitle>
        <WinCtl>
          <SignIn>Inic. ses.</SignIn>
          <Cell $w={40}><DisplayIcon /></Cell>
          <Cell $w={60} $ml={12}><MinIcon /></Cell>
          <Cell $w={58}><RestoreIcon /></Cell>
          <Cell $w={62}><CloseIcon /></Cell>
        </WinCtl>
      </TitleBar>

      <TabBar>
        <Tab $w={83}>Archivo</Tab>
        <Tab $w={66} $ml={7} $on>Inicio</Tab>
        {tabs.map(([t, w]) => <Tab key={t} $w={w}>{t}</Tab>)}
        <TellMe><BulbIcon />¿Qué desea?</TellMe>
        <Share><PersonIcon />Compartir</Share>
      </TabBar>

      <Ribbon>
        <Group $w={118}>
          <GroupBody>
            <Clip>
              <PasteCol>
                <PasteIcon />
                <PasteName>Pegar</PasteName>
                <CaretGap><Caret /></CaretGap>
              </PasteCol>
              <ClipTools>
                <CutIcon />
                <CopyIcon />
                <BrushIcon />
              </ClipTools>
            </Clip>
          </GroupBody>
          <GroupFoot><FootLabel>Portapapeles</FootLabel><Launcher><LauncherIcon /></Launcher></GroupFoot>
        </Group>

        <Group $w={398}>
          <GroupBody>
            <Rows $pl={10} $pt={11}>
              <Row $h={33} $mb={10}>
                <Combo $w={131} $ml={2}>Verdana<Chevron /></Combo>
                <Combo $w={80}>12<Chevron /></Combo>
                <Cell $w={32}><Glyph $s={18}>A</Glyph><GrowMark /></Cell>
                <Cell $w={32}><Glyph $s={16}>A</Glyph><GrowMark $down /></Cell>
                <Sep $ml={6} $h={32} />
                <Cell $w={30} $ml={4}><Glyph $s={16}>Aa</Glyph></Cell>
                <Cell $w={10}><Caret /></Cell>
                <Sep $ml={9} $h={32} />
                <Cell $w={40}><EraserIcon /></Cell>
              </Row>
              <Row $h={32}>
                <Cell $w={33}><Glyph $b>N</Glyph></Cell>
                <Cell $w={33}><Glyph $b $i>K</Glyph></Cell>
                <Cell $w={34}><Glyph $b $u>S</Glyph></Cell>
                <Cell $w={16}><Caret /></Cell>
                <Cell $w={32}><Glyph $s={13} $st>abc</Glyph></Cell>
                <Cell $w={33}><Glyph $b>x<Sub>2</Sub></Glyph></Cell>
                <Cell $w={33}><Glyph $b>x<Sup>2</Sup></Glyph></Cell>
                <Sep $ml={6} />
                <Cell $w={34} $ml={2}><Outlined>A</Outlined></Cell>
                <Cell $w={6}><Caret /></Cell>
                <Cell $w={45}>
                  <HighlightBox><AbLabel>ab</AbLabel><PenIcon /><ColorBar $c="#ffff00" $h={7} /></HighlightBox>
                </Cell>
                <Cell $w={6}><Caret /></Cell>
                <Cell $w={42}>
                  <ColorA><Glyph $b $s={20}>A</Glyph><ColorBar $c="#ff0000" $h={5} /></ColorA>
                </Cell>
                <Cell $w={10}><Caret /></Cell>
              </Row>
            </Rows>
          </GroupBody>
          <GroupFoot><FootLabel>Fuente</FootLabel><Launcher><LauncherIcon /></Launcher></GroupFoot>
        </Group>

        <Group $w={243}>
          <GroupBody>
            <Rows $pl={11} $pt={0}>
              <Row $h={31} $mb={2}>
                <Cell $w={32}><Bullets /></Cell>
                <Cell $w={18}><Caret /></Cell>
                <Cell $w={30}><Numbers /></Cell>
                <Cell $w={20}><Caret /></Cell>
                <Cell $w={28}><Multi /></Cell>
                <Cell $w={14}><Caret /></Cell>
                <Sep $ml={8} />
                <Cell $w={36}><Indent out /></Cell>
                <Cell $w={30}><Indent /></Cell>
              </Row>
              <Row $h={33}>
                <Cell $w={32}><Align w={15} rows={[[0, 15], [0, 10], [0, 15], [0, 10]]} /></Cell>
                <Cell $w={34}><Align w={16} rows={[[0, 16], [3, 13], [0, 16], [3, 13]]} /></Cell>
                <Cell $w={32}><Align w={15} rows={[[0, 15], [5, 15], [0, 15], [5, 15]]} /></Cell>
                <Cell $w={33} $ml={2} $on><Align w={17} rows={[[0, 17], [0, 17], [0, 17], [0, 17], [0, 17]]} /></Cell>
                <Sep $ml={4} />
                <Cell $w={36}><LineSpace /></Cell>
                <Cell $w={6}><Caret /></Cell>
              </Row>
              <Row $h={31}>
                <Cell $w={32}><Shading /></Cell>
                <Cell $w={18}><Caret /></Cell>
                <Cell $w={30}><Borders /></Cell>
                <Cell $w={20}><Caret /></Cell>
                <Sep $ml={3} />
                <Cell $w={40}>
                  <SortBox>
                    <SortLetters><SortLetter $c="#2e75b6">A</SortLetter><SortLetter $c="#7a4ea8">Z</SortLetter></SortLetters>
                    <SortArrow />
                  </SortBox>
                </Cell>
                <Sep $ml={1} />
                <Cell $w={36}><Glyph $s={19} $b $c="#6a6a6a">¶</Glyph></Cell>
              </Row>
            </Rows>
          </GroupBody>
          <GroupFoot><FootLabel>Párrafo</FootLabel><Launcher><LauncherIcon /></Launcher></GroupFoot>
        </Group>

        <Group $w={370}>
          <GroupBody>
            <Gallery>
              <StyleItem $w={105} $sel>
                <Sample>AaBbCcDd</Sample>
                <StyleName>¶ Normal</StyleName>
              </StyleItem>
              <StyleItem $w={105}>
                <Sample>AaBbCcDd</Sample>
                <StyleName>¶ Sin espa...</StyleName>
              </StyleItem>
              <StyleItem $w={105}>
                <Sample $big>AaBbCcDd</Sample>
                <StyleName>Título 1</StyleName>
              </StyleItem>
              <Scroller>
                <ScrollBtn $h={30}><Chevron up c="#c6c6c6" /></ScrollBtn>
                <ScrollBtn $h={27}><Chevron /></ScrollBtn>
                <ScrollBtn $h={29}><Chevron /></ScrollBtn>
              </Scroller>
            </Gallery>
          </GroupBody>
          <GroupFoot><FootLabel>Estilos</FootLabel><Launcher><LauncherIcon /></Launcher></GroupFoot>
        </Group>

        <Group $w={83}>
          <GroupBody>
            <EditCol>
              <EditBtn><SearchIcon /></EditBtn>
              <EditName>Edición</EditName>
              <CaretGap><Caret /></CaretGap>
            </EditCol>
          </GroupBody>
        </Group>
        <Collapse><Chevron w={15} c="#444" up /></Collapse>
      </Ribbon>

      <RulerRow>
        <TabCorner><CornerL /></TabCorner>
        <HorizontalRuler />
      </RulerRow>

      <DocArea>
        <VerticalRuler />
        <Page>
          {lines.map((l, i) => (
            <DocLine key={i} $mb={l.mb}>
              {l.runs.map(([c, n, ls], j) => <Run key={j} $ls={ls}>{c.repeat(n)}</Run>)}
            </DocLine>
          ))}
        </Page>
      </DocArea>

      <StatusBar>
        <StatusText $w={117} $ml={10}>Página 1 de 1</StatusText>
        <StatusText $w={95}>4 palabras</StatusText>
        <Cell $w={20}><ProofIcon /></Cell>
        <StatusText $w={120} $ml={26}>Español (España)</StatusText>
        <Cell $w={56} $ml={462}><ReadIcon /></Cell>
        <Cell $w={57} $on><PrintIcon /></Cell>
        <Cell $w={58}><WebIcon /></Cell>
        <Cell $w={24} $ml={1}><PlusMinus /></Cell>
        <ZoomSlider><Thumb /></ZoomSlider>
        <Cell $w={24}><PlusMinus plus /></Cell>
        <StatusText $w={50} $ml={12}>100 %</StatusText>
      </StatusBar>

      <Taskbar>
        <TaskCell $w={46} $ml={10}><Orb /></TaskCell>
        <TaskCell $w={12} $ml={13}><Grip /></TaskCell>
        <TaskCell $w={44} $ml={20}><MediaIcon /></TaskCell>
        <TaskCell $w={73} $ml={22} $active><ExplorerIcon /></TaskCell>
        <TaskCell $w={46} $ml={16}><ExcelIcon /></TaskCell>
        <TaskCell $w={46} $ml={30}><EdgeIcon /></TaskCell>
        <TaskCell $w={46} $ml={30}><FirefoxIcon /></TaskCell>
        <TaskCell $w={74} $ml={17} $active><WordIcon /></TaskCell>
        <TaskCell $w={64} $ml={3} $active><NotepadIcon /></TaskCell>
        <TaskCell $w={4} $ml={3} $active />
        <TaskCell $w={46} $ml={19}><OutlookIcon /></TaskCell>
        <TaskCell $w={12} $ml={343}><Grip /></TaskCell>
        <LangText>ES</LangText>
        <TaskCell $w={10} $ml={14}><TrayUp /></TaskCell>
        <TaskCell $w={24} $ml={20}><FlagIcon /></TaskCell>
        <Clock><span>15:34</span><span>20/02/2025</span></Clock>
        <ShowDesktop />
      </Taskbar>
    </Screen>
  );
}
